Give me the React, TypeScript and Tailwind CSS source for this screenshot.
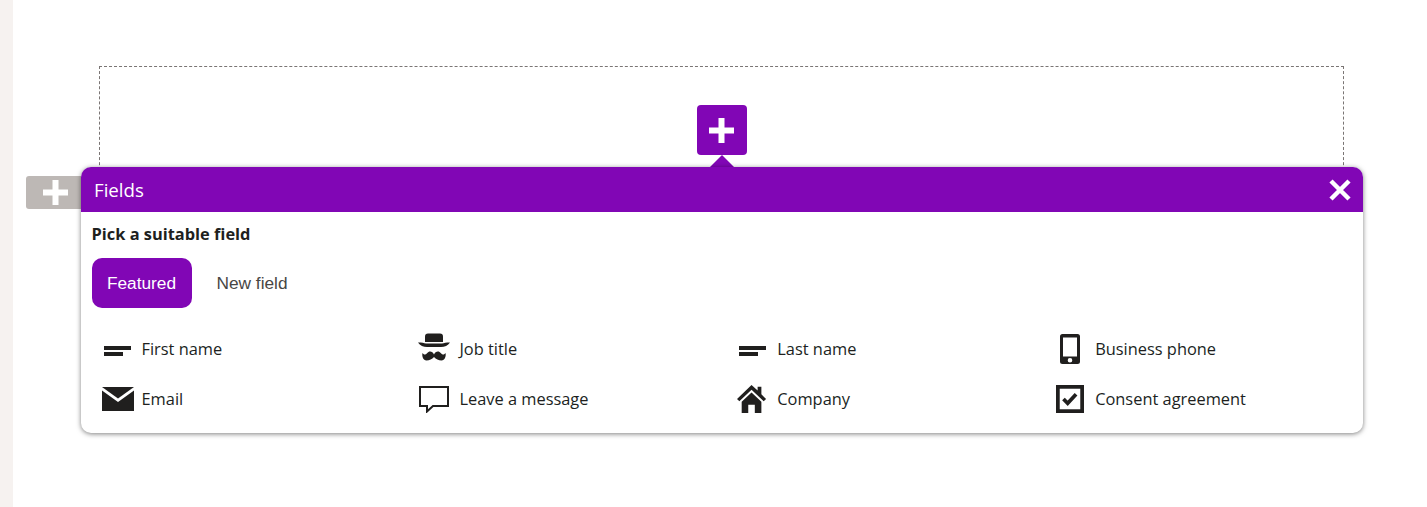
import type { ReactNode } from "react";

const textFont = "font-['Open_Sans','Noto_Sans',sans-serif]";

const DashIcon = () => (
  <svg width="30" height="30" viewBox="0 0 30 30" fill="#201f1e">
    <rect x="2" y="12" width="27" height="4" />
    <rect x="2" y="18" width="19" height="4" />
  </svg>
);

const HatIcon = () => (
  <svg className="-ml-[1px]" width="32" height="32" viewBox="0 0 32 32" fill="#201f1e">
    <path d="M7 3.500C7 1.800 8 .5 10 .5h12c2 0 3 1.300 3 3V9H7z" />
    <path d="M0 9.500C4 9.500 6 10 8 10.500h16c2-.5 4-1 8-1-2 3-5.500 4.500-9 4.500H9C5.500 14 2 12.500 0 9.500z" />
    <path d="M16 21.500c-1-2.500-3.500-3.500-5.500-2.500-1.500.7-2 2.500-3.500 2.500-1.200 0-2-.7-2.500-1.500-.8 3 .7 7.500 4 7.500 3 0 5.500-1.500 7.500-3.500 2 2 4.500 3.500 7.500 3.500 3.300 0 4.800-4.500 4-7.500-.5.800-1.300 1.500-2.500 1.500-1.500 0-2-1.800-3.500-2.500-2-1-4.500 0-5.500 2.500z" />
  </svg>
);

const PhoneIcon = () => (
  <svg width="30" height="30" viewBox="0 0 30 30">
    <path
      fillRule="evenodd"
      fill="#201f1e"
      d="M7.500 0h15A2.500 2.500 0 0 1 25 2.500v25a2.500 2.500 0 0 1-2.500 2.500h-15A2.500 2.500 0 0 1 5 27.500v-25A2.500 2.500 0 0 1 7.500 0zM8 3.500V22.500h14V3.500zm7 20.500a2.300 2.300 0 1 0 0 4.600 2.300 2.300 0 0 0 0-4.600z"
    />
  </svg>
);

const MailIcon = () => (
  <svg width="32" height="24" viewBox="0 0 32 24" fill="#201f1e">
    <path d="M0 0l16 11.500L32 0z" />
    <path d="M0 3.500V24h32V3.500L16 15z" />
  </svg>
);

const BubbleIcon = () => (
  <svg width="32" height="28" viewBox="0 0 32 28" fill="none" stroke="#201f1e" strokeWidth="2">
    <path d="M1 2h28v19H14l-6 5.500V21H1z" />
  </svg>
);

const HomeIcon = () => (
  <svg width="30" height="30" viewBox="0 0 32 30" fill="#201f1e">
    <path d="M15.500 0L0 15l2.500 2.500L15.500 5l13 12.500L31 15 26 10V2h-4v4z" />
    <path d="M15.500 8L5 18v12h7v-9h7v9h7V18z" />
  </svg>
);

const CheckIcon = () => (
  <svg className="ml-[1px]" width="28" height="28" viewBox="0 0 30 30">
    <rect x="2" y="2" width="26" height="26" fill="none" stroke="#201f1e" strokeWidth="4" />
    <path d="M8 15l4.500 4.500 9-9.500" fill="none" stroke="#201f1e" strokeWidth="4" />
  </svg>
);

const fields: { label: string; icon: ReactNode }[] = [
  { label: "First name", icon: <DashIcon /> },
  { label: "Job title", icon: <HatIcon /> },
  { label: "Last name", icon: <DashIcon /> },
  { label: "Business phone", icon: <PhoneIcon /> },
  { label: "Email", icon: <MailIcon /> },
  { label: "Leave a message", icon: <BubbleIcon /> },
  { label: "Company", icon: <HomeIcon /> },
  { label: "Consent agreement", icon: <CheckIcon /> },
];

const PlusGlyph = () => (
  <svg width="25" height="25" viewBox="0 0 25 25" fill="#fff">
    <path d="M9.500 0h6v9.500H25v6h-9.500V25h-6v-9.500H0v-6h9.500z" />
  </svg>
);

export default function App() {
  return (
    <div className={`flex h-[507px] bg-white ${textFont}`}>
      {/* left rail */}
      <div className="w-[13px] shrink-0 bg-[#f6f2f0]" />

      <div className="relative flex-1 pl-[86px] pt-[66px]">
        <div className="flex h-[170px] w-[1245px] justify-center border border-dashed border-[#7a7574] pt-[38px]">
          <div className="flex h-[50px] w-[50px] items-center justify-center rounded-[4px] bg-[#8106b5]">
            <PlusGlyph />
          </div>
        </div>

        {/* arrow under the add button */}
        <svg className="absolute left-[697px] top-[155px]" width="24" height="12" viewBox="0 0 24 12" fill="#8106b5">
          <path d="M12 0l12 12H0z" />
        </svg>

        {/* side add handle */}
        <div className="absolute left-[13px] top-[176px] flex h-[33px] w-[60px] items-center justify-center rounded-l-[3px] bg-[#bdb8b5] pr-[2px]">
          <PlusGlyph />
        </div>

        {/* fields popup */}
        <div className="absolute left-[68px] top-[167px] w-[1282px] rounded-[10px] bg-white shadow-[0_1px_5px_rgba(0,0,0,0.5)]">
          <div className="flex h-[45px] items-center justify-between rounded-t-[10px] bg-[#8106b5] pl-[13px] pr-[11px]">
            <span className="text-[18.7px] leading-[48px] text-white">Fields</span>
            <svg width="24" height="24" viewBox="0 0 24 24" stroke="#fff" strokeWidth="4.500">
              <path d="M3 3l18 18M21 3L3 21" />
            </svg>
          </div>

          <div className="pb-[9px] pl-[10.5px] pt-[10px]">
            <p className="text-[16.4px] font-bold leading-[24px] text-[#201f1e]">Pick a suitable field</p>

            <div className="mt-[12px] flex font-['Liberation_Sans',sans-serif] text-[17.3px]">
              <div className="flex h-[50px] w-[100px] items-center justify-center rounded-[10px] bg-[#8106b5] pt-[1px] text-white">
                Featured
              </div>
              <div className="flex h-[50px] items-center pl-[25px] pt-[1px] text-[#484644]">New field</div>
            </div>

            <div className="mt-[16px] grid grid-cols-4">
              {fields.map((f) => (
                <div key={f.label} className="flex h-[50px] items-center">
                  <div className="flex w-[50px] shrink-0 items-center justify-start pl-[10px]">{f.icon}</div>
                  <span className="text-[16.4px] text-[#201f1e]">{f.label}</span>
                </div>
              ))}
            </div>
          </div>
        </div>
      </div>
    </div>
  );
}
